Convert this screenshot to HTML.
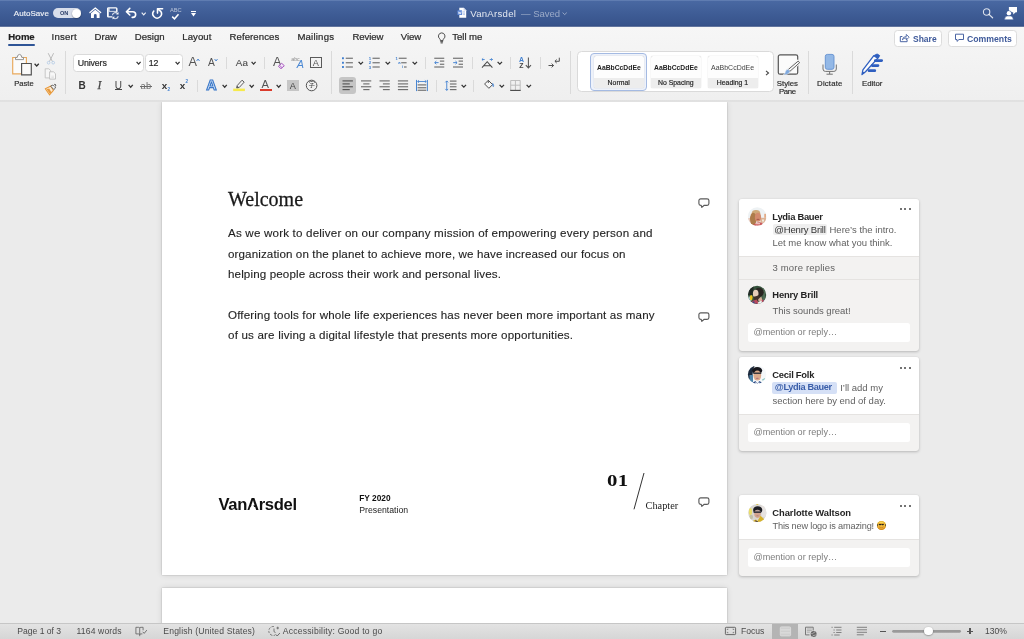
<!DOCTYPE html>
<html lang="en">
<head>
<meta charset="utf-8">
<title>VanArsdel</title>
<style>
*{box-sizing:border-box;margin:0;padding:0}
html,body{width:1024px;height:639px;overflow:hidden}
body{position:relative;background:#ebebeb;font-family:"Liberation Sans",sans-serif;color:#222;-webkit-font-smoothing:antialiased}
#root{position:absolute;left:0;top:0;width:1024px;height:639px;overflow:hidden;will-change:transform}
.abs{position:absolute}
.t{position:absolute;white-space:nowrap;line-height:1}
svg{position:absolute;overflow:visible}
/* title bar */
#titlebar{position:absolute;left:0;top:0;width:1024px;height:27px;background:linear-gradient(#5f7cb1 0,#5f7cb1 1px,#4968a2 1px,#3f5d96 13px,#37538b 25px,#334d84 26px,#62759e 26px,#62759e 27px)}
#titlebar .t{color:#fff}
/* ribbon */
#ribbon{position:absolute;left:0;top:27px;width:1024px;height:74.600px;background:linear-gradient(#f6f6f6,#f3f3f3 40%,#efefef 72.700px,#e4e4e4 73.200px,#dbdbdb 74px,#e2e2e2 74.600px)}
.tab{position:absolute;top:32px;font-size:9.6px;line-height:1;color:#2b2b2b;white-space:nowrap;letter-spacing:.1px;-webkit-text-stroke:.22px #2b2b2b}
.vsep{position:absolute;width:1px;background:#dcdcdc}
.lbl{position:absolute;font-size:8px;line-height:9px;color:#2b2b2b;text-align:center;white-space:nowrap;-webkit-text-stroke:.18px #2b2b2b}
.caret{position:absolute;width:5px;height:3px}
/* page */
.page{position:absolute;background:#fff;box-shadow:0 0 6px rgba(0,0,0,.12),0 0 1.500px rgba(0,0,0,.26)}
.body{position:absolute;left:228px;font-size:11.6px;line-height:12px;color:#1f1f1f;white-space:nowrap;-webkit-text-stroke:.12px #1f1f1f}
/* comments */
.card{position:absolute;left:739px;width:180px;background:#f3f2f1;border-radius:3px;box-shadow:0 1px 3px rgba(0,0,0,.22),0 0 1px rgba(0,0,0,.15);overflow:hidden}
.card .top{position:absolute;left:0;top:0;width:100%;background:#fff}
.cname{position:absolute;left:33.3px;font-size:9.4px;font-weight:bold;color:#242424;white-space:nowrap;line-height:1}
.ctext{position:absolute;left:33.5px;font-size:9.5px;color:#616161;white-space:nowrap;line-height:1}
.reply{position:absolute;left:9px;width:161.800px;height:18.600px;background:#fff;border-radius:2.500px;font-size:9.1px;color:#7d7d7d;line-height:18.6px;padding-left:5.500px;white-space:nowrap}
.dots{position:absolute;left:160.5px;width:11px;height:3px}
.dots i{position:absolute;top:0;width:2px;height:2px;border-radius:1px;background:#444}
.av{position:absolute;left:9px;width:18px;height:18px;border-radius:9px;overflow:hidden}
/* status bar */
#status{position:absolute;left:0;top:623px;width:1024px;height:16px;background:linear-gradient(#c6c6c6 0,#c6c6c6 .8px,#e3e3e3 .8px,#d6d6d6)}
#status .t{font-size:8.6px;color:#4a4a4a;top:3.700px}
</style>
</head>
<body>
<div id="root">

<!-- ================= DOCUMENT AREA ================= -->
<div class="page" style="left:162px;top:102px;width:565px;height:473.300px"></div>
<div class="page" style="left:162px;top:588px;width:565px;height:60px"></div>

<div class="t" style="left:228px;top:188.7px;font-family:'Liberation Serif',serif;font-size:20px;color:#1a1a1a;-webkit-text-stroke:.28px #1a1a1a">Welcome</div>
<div class="body" style="top:227.3px;letter-spacing:.189px">As we work to deliver on our company mission of empowering every person and</div>
<div class="body" style="top:247.7px;letter-spacing:.113px">organization on the planet to achieve more, we have increased our focus on</div>
<div class="body" style="top:268.2px;letter-spacing:.134px">helping people across their work and personal lives.</div>
<div class="body" style="top:308.7px;letter-spacing:.159px">Offering tools for whole life experiences has never been more important as many</div>
<div class="body" style="top:329.1px;letter-spacing:.181px">of us are living a digital lifestyle that presents more opportunities.</div>

<!-- footer of page -->
<div class="t" id="logo" style="left:218.500px;top:496.600px;font-size:16.600px;font-weight:bold;color:#111;letter-spacing:-.32px">Van<span style="position:relative">A<i style="position:absolute;left:.13em;top:.52em;width:.36em;height:.4em;background:#fff;clip-path:polygon(58% 0,100% 100%,0 100%)"></i></span>rsdel</div>
<div class="t" style="left:359.3px;top:494.4px;font-size:8.3px;font-weight:bold;color:#111">FY 2020</div>
<div class="t" style="left:359.3px;top:506.400px;font-size:8.700px;color:#222">Presentation</div>
<div class="t" style="left:606.500px;top:471.900px;font-family:'Liberation Serif',serif;font-size:17.500px;font-weight:bold;color:#111;letter-spacing:.2px;transform:scaleX(1.190);transform-origin:0 50%">01</div>
<svg style="left:630px;top:470px" width="20" height="42"><line x1="14" y1="3" x2="4" y2="39.3" stroke="#333" stroke-width="1"/></svg>
<div class="t" style="left:645.600px;top:501.300px;font-family:'Liberation Serif',serif;font-size:10.300px;color:#222">Chapter</div>

<!-- comment balloons -->
<svg class="bal" style="left:697px;top:196px" width="14" height="13" viewBox="0 0 14 13"><path d="M3.7 2.8h6.4a1.8 1.8 0 0 1 1.8 1.8v2.9a1.8 1.8 0 0 1-1.8 1.8H7.2L4.8 11.4 4.2 9.3H3.7a1.8 1.8 0 0 1-1.8-1.8V4.6a1.8 1.8 0 0 1 1.8-1.8z" fill="#fff" stroke="#5a5a5a" stroke-width="1.15" stroke-linejoin="round"/></svg>
<svg class="bal" style="left:697px;top:310px" width="14" height="13" viewBox="0 0 14 13"><path d="M3.7 2.8h6.4a1.8 1.8 0 0 1 1.8 1.8v2.9a1.8 1.8 0 0 1-1.8 1.8H7.2L4.8 11.4 4.2 9.3H3.7a1.8 1.8 0 0 1-1.8-1.8V4.6a1.8 1.8 0 0 1 1.8-1.8z" fill="#fff" stroke="#5a5a5a" stroke-width="1.15" stroke-linejoin="round"/></svg>
<svg class="bal" style="left:697px;top:494.600px" width="14" height="13" viewBox="0 0 14 13"><path d="M3.7 2.8h6.4a1.8 1.8 0 0 1 1.8 1.8v2.9a1.8 1.8 0 0 1-1.8 1.8H7.2L4.8 11.4 4.2 9.3H3.7a1.8 1.8 0 0 1-1.8-1.8V4.6a1.8 1.8 0 0 1 1.8-1.8z" fill="#fff" stroke="#5a5a5a" stroke-width="1.15" stroke-linejoin="round"/></svg>


<!-- ================= COMMENTS ================= -->
<svg width="0" height="0" style="left:0;top:0"><defs>
<filter id="bl" x="-20%" y="-20%" width="140%" height="140%"><feGaussianBlur stdDeviation="0.55"/></filter>
<filter id="bl2" x="-20%" y="-20%" width="140%" height="140%"><feGaussianBlur stdDeviation="0.35"/></filter>
<clipPath id="c1"><circle cx="13.2" cy="12.6" r="9.3"/></clipPath>
<clipPath id="c2"><circle cx="13.1" cy="12.9" r="9.1"/></clipPath>
<clipPath id="c3"><circle cx="13.1" cy="12.6" r="9.2"/></clipPath>
<clipPath id="c4"><circle cx="13.3" cy="13" r="9.1"/></clipPath>
</defs></svg>

<div class="card" style="top:198.5px;height:152px">
  <div class="top" style="height:57.5px"></div>
  <div class="abs" style="left:0;top:57.5px;width:180px;height:1px;background:#e5e3e1"></div>
  <div class="abs" style="left:0;top:80px;width:180px;height:1px;background:#e5e3e1"></div>
  <svg style="left:5px;top:5.5px" width="26" height="26" viewBox="0 0 26 26"><g clip-path="url(#c1)"><rect width="26" height="26" fill="#eef2f4"/><g filter="url(#bl)"><rect x="3" y="14" width="5" height="5" fill="#e6c9bb"/><rect x="16.500" y="13.800" width="6.500" height="5" fill="#dcb294"/><rect x="20.300" y="9.800" width="1.600" height="4" fill="#e2a47c"/><ellipse cx="19" cy="16.500" rx="1" ry="1.200" fill="#f1ece0"/><ellipse cx="12" cy="9.300" rx="4.300" ry="3.400" fill="#cfa878"/><ellipse cx="9.300" cy="15" rx="3.300" ry="6.300" fill="#ad7b4b"/><ellipse cx="14" cy="13.200" rx="3.100" ry="4.500" fill="#d38b6e"/><ellipse cx="14" cy="15.300" rx="1.700" ry=".6" fill="#a9584c"/><path d="M9.500 26v-5.500q4.500-3.500 9-1.500v7z" fill="#cc5b5b"/><path d="M11.500 19.300h4.500v.9h-4.500zM12 21.500h5v.8h-5z" fill="#f3dcd8"/></g></g></svg>
  <div class="dots" style="top:9.9px"><i style="left:0"></i><i style="left:4.5px"></i><i style="left:9px"></i></div>
  <div class="cname" style="top:13px;letter-spacing:-.27px">Lydia Bauer</div>
  <div class="abs" style="left:33.5px;top:25.3px;width:54.5px;height:11px;background:#efefef;border-radius:2px"></div>
  <div class="ctext" style="left:35.3px;top:26.4px;color:#333;letter-spacing:-.17px">@Henry Brill</div>
  <div class="ctext" style="left:90.5px;top:26.4px">Here’s the intro.</div>
  <div class="ctext" style="top:39.5px">Let me know what you think.</div>
  <div class="ctext" style="top:64.5px;letter-spacing:.17px">3 more replies</div>
  <svg style="left:5px;top:83.500px" width="26" height="26" viewBox="0 0 26 26"><g clip-path="url(#c2)"><rect width="26" height="26" fill="#35523c"/><g filter="url(#bl)"><rect x="3" y="3" width="6.500" height="10" fill="#222b25"/><rect x="18.500" y="6" width="2.500" height="13" fill="#4f6c55"/><ellipse cx="5.500" cy="17.500" rx="2" ry="3" fill="#a9cfd8"/><ellipse cx="7.200" cy="15.600" rx="1.400" ry="2.700" fill="#ecc41f"/><ellipse cx="15" cy="10.300" rx="4.700" ry="4.600" fill="#2b2723"/><ellipse cx="11.700" cy="11.800" rx="2.800" ry="4" fill="#e6cdb9"/><path d="M9.300 14.200q2.500 1 5.700-1.500l1.200 4.300q-3 3.500-5.800 1.300z" fill="#40322b"/><path d="M14.200 17.200l3.200-2.700 1.200 5h-4z" fill="#d8b19a"/><path d="M6.500 26l1.500-7 4.500-1.500 2.500 3.500 3.500-3.500 3.500 1.500 1.500 7z" fill="#b8485b"/><path d="M8.500 19.500h2v4h-2zM19.500 18.500h2v4h-2zM11.500 21.500h1.500v3h-1.500z" fill="#39498c"/><path d="M13.800 20.500l3.700-2 1.500 5h-5z" fill="#eef2f5"/></g></g></svg>
  <div class="cname" style="top:91.8px;letter-spacing:-.15px">Henry Brill</div>
  <div class="ctext" style="top:107px">This sounds great!</div>
  <div class="reply" style="top:124.5px">@mention or reply…</div>
</div>

<div class="card" style="top:357px;height:94px">
  <div class="top" style="height:57px"></div>
  <div class="abs" style="left:0;top:57px;width:180px;height:1px;background:#e5e3e1"></div>
  <svg style="left:5px;top:5px" width="26" height="26" viewBox="0 0 26 26"><g clip-path="url(#c3)"><rect width="26" height="26" fill="#f5f8fa"/><g filter="url(#bl)"><path d="M0 0h12l-3 8-1 12H0z" fill="#1d2b3c"/><path d="M5.500 13h3.500v7H5.500z" fill="#4f86ad"/><ellipse cx="13.200" cy="8.600" rx="5" ry="3.700" fill="#14161b"/><ellipse cx="13.300" cy="13.600" rx="3.900" ry="5" fill="#dcab8d"/><rect x="9.300" y="10.600" width="8" height="1.500" rx=".5" fill="#3a3a40"/><ellipse cx="13.300" cy="16.300" rx="1.500" ry=".6" fill="#b5707a"/><path d="M7.500 26l.5-5 3.500-2 1.800 2.500 2-2.500 3.500 2 .5 5z" fill="#2f4c84"/><path d="M11.500 19.500l1.800 2.500 2-2.500v4h-3.800z" fill="#f2f4f8"/><path d="M18 17.500l3-1.500.5 1.200-3 1.500z" fill="#8fc7c2"/></g></g></svg>
  <div class="dots" style="top:9.5px"><i style="left:0"></i><i style="left:4.5px"></i><i style="left:9px"></i></div>
  <div class="cname" style="top:12.6px;letter-spacing:-.24px">Cecil Folk</div>
  <div class="abs" style="left:33px;top:25px;width:64.6px;height:12px;background:#d5e0f6;border-radius:2px"></div>
  <div class="ctext" style="left:35.8px;top:26.3px;color:#3a5ea9;font-weight:bold;font-size:9.2px;letter-spacing:-.35px">@Lydia Bauer</div>
  <div class="ctext" style="left:101.2px;top:26.3px">I’ll add my</div>
  <div class="ctext" style="top:39px">section here by end of day.</div>
  <div class="reply" style="top:66.4px">@mention or reply…</div>
</div>

<div class="card" style="top:495.2px;height:80.8px">
  <div class="top" style="height:43.8px"></div>
  <div class="abs" style="left:0;top:43.8px;width:180px;height:1px;background:#e5e3e1"></div>
  <svg style="left:5px;top:4.800px" width="26" height="26" viewBox="0 0 26 26"><g clip-path="url(#c4)"><rect width="26" height="26" fill="#d9d6d2"/><g filter="url(#bl)"><rect x="17.500" y="4" width="6" height="13" fill="#e6e2e0"/><ellipse cx="6.400" cy="11.500" rx="1.700" ry="3.500" fill="#e8dc6a"/><ellipse cx="7.200" cy="17" rx="1.800" ry="2.300" fill="#c2c0a6"/><ellipse cx="13.300" cy="4.300" rx="1.200" ry=".6" fill="#d9c24a"/><ellipse cx="13.700" cy="10" rx="4.600" ry="3.800" fill="#1f1e24"/><ellipse cx="13.500" cy="13.800" rx="3.300" ry="4.100" fill="#d3a590"/><rect x="9.600" y="11.300" width="7.400" height="1.700" rx=".6" fill="#3a3840"/><path d="M10.800 11.300l2.700-1.200 3.200 1.200z" fill="#9d9ea6" opacity=".8"/><ellipse cx="13.500" cy="15.800" rx="1.300" ry=".5" fill="#b97f74"/><path d="M8.500 26l1-5.500 2.500-1 1.500 1.500 3-5.200 4 3.700 1.500 6.500z" fill="#d6b22c"/><path d="M10.800 20.200l3.200 1-1.700 2.600z" fill="#51403a"/></g></g></svg>
  <div class="dots" style="top:9.8px"><i style="left:0"></i><i style="left:4.5px"></i><i style="left:9px"></i></div>
  <div class="cname" style="top:12.7px;letter-spacing:-.07px">Charlotte Waltson</div>
  <div class="ctext" style="top:26.6px;font-size:9.2px;letter-spacing:-.17px">This new logo is amazing!</div>
  <div class="abs" style="left:137.800px;top:26px;width:8.800px;height:8.800px;border-radius:4.400px;background:linear-gradient(#fde566,#f6c03c 45%,#eda32e)"></div>
  <div class="t" style="left:137px;top:25.600px;font-family:'DejaVu Sans',sans-serif;font-size:10px;color:transparent;background:linear-gradient(#e0aa30 0,#e0aa30 27%,#25211f 31%,#25211f 50%,#c98a22 56%,#c27c18 100%);-webkit-background-clip:text;background-clip:text">😎</div>
  <div class="reply" style="top:53.3px">@mention or reply…</div>
</div>

<!-- ================= TITLE BAR ================= -->
<div id="titlebar">
  <div class="t" style="left:13.8px;top:9.900px;font-size:8px;color:rgba(255,255,255,.9);letter-spacing:.05px;-webkit-text-stroke:.15px rgba(255,255,255,.9)">AutoSave</div>
  <div class="abs" style="left:53.2px;top:8.300px;width:28.300px;height:9.800px;border-radius:5px;background:#d8deeb"></div>
  <div class="t" style="left:60px;top:11.2px;font-size:5.6px;font-weight:bold;color:#2a3d68">ON</div>
  <div class="abs" style="left:72.3px;top:8.5px;width:9.2px;height:9.2px;border-radius:5px;background:#fff;box-shadow:0 .5px 1.5px rgba(0,0,0,.45)"></div>
  <!-- home -->
  <svg style="left:89px;top:7px" width="13" height="12" viewBox="0 0 13 12"><path d="M.9 5.500L6.300 1l5.400 4.500" fill="none" stroke="#fff" stroke-width="1.250" stroke-linecap="round" stroke-linejoin="round"/><path d="M2 6.200L6.300 2.700l4.300 3.500v4.900H7.700V8.400a1.400 1.400 0 0 0-2.800 0v2.700H2z" fill="#fff"/></svg>
  <!-- save w/ sync -->
  <svg style="left:106px;top:7px" width="14" height="13" viewBox="0 0 14 13"><path d="M6.300 9.900H2.600a.9.900 0 0 1-.9-.9V1.700a.9.900 0 0 1 .9-.9h7.400a.9.900 0 0 1 .9.900v3.500" fill="none" stroke="#fff" stroke-width="1.300"/><path d="M1.800 1.500v8" stroke="#fff" stroke-width="1.600"/><path d="M3.200 1.100v3.300h7.300V1.100" fill="none" stroke="rgba(255,255,255,.85)" stroke-width=".9"/><path d="M6.400 8.300a3 3 0 0 1 5.300-1.500M12.200 9.100a3 3 0 0 1-5.300 1.500" fill="none" stroke="rgba(255,255,255,.8)" stroke-width="1.100"/><path d="M12.600 5v2.600H10zM6.500 12.400V9.800h2.600z" fill="rgba(255,255,255,.85)"/></svg>
  <!-- undo -->
  <svg style="left:125px;top:7px" width="14" height="12" viewBox="0 0 14 12"><path d="M4.800 1.400L1.400 4.700l3.400 3.300M1.700 4.700h6.100a2.850 2.850 0 0 1 0 5.700h-.6" fill="none" stroke="#fff" stroke-width="1.600" stroke-linecap="round" stroke-linejoin="round"/></svg>
  <svg style="left:140.800px;top:11.600px" width="6" height="4" viewBox="0 0 6 4"><path d="M.7.700l2 2.100 2-2.100" fill="none" stroke="rgba(255,255,255,.9)" stroke-width="1.200"/></svg>
  <!-- redo -->
  <svg style="left:151px;top:7px" width="13" height="13" viewBox="0 0 13 13"><path d="M2.800 4A4.300 4.300 0 1 0 9.700 4.300L6.700 1.900" fill="none" stroke="#fff" stroke-width="1.550" stroke-linecap="round"/><path d="M11.600 1.800H6.500v4.300" fill="none" stroke="#fff" stroke-width="1.550" stroke-linecap="round" stroke-linejoin="round"/></svg>
  <!-- abc check -->
  <div class="t" style="left:169.900px;top:7.600px;font-size:5.700px;color:rgba(255,255,255,.62)">ABC</div>
  <svg style="left:171px;top:12.500px" width="10" height="7" viewBox="0 0 10 7"><path d="M1.200 3.600l2.300 2.200L7.500 1.200" fill="none" stroke="#fff" stroke-width="1.500"/></svg>
  <!-- customize -->
  <svg style="left:190px;top:10px" width="7" height="8" viewBox="0 0 7 8"><path d="M1 1.500h5" stroke="#fff" stroke-width="1.100"/><path d="M1 3h5L3.500 6.500z" fill="#fff"/></svg>
  <!-- doc icon -->
  <svg style="left:457px;top:7px" width="10" height="12" viewBox="0 0 10 12"><path d="M2.300.8h4.500L9.200 3.200v7.600H2.300z" fill="#fff"/><path d="M6.600.8v2.600h2.600z" fill="#c8d3ea"/><rect x=".4" y="3.300" width="4.800" height="4.800" rx=".7" fill="#5b86d6"/><path d="M1.300 4.500l.8 2.600.7-2.200.7 2.200.8-2.600" fill="none" stroke="#fff" stroke-width=".6"/><path d="M6 4.800h2M6 6.200h2M6 7.600h2" stroke="#8aa6dc" stroke-width=".6"/></svg>
  <div class="t" style="left:470.200px;top:8.900px;font-size:9.600px;color:rgba(255,255,255,.86);letter-spacing:.27px">VanArsdel</div>
  <div class="t" style="left:521px;top:8.900px;font-size:9.500px;color:rgba(255,255,255,.47)">— Saved</div>
  <svg style="left:562px;top:11.800px" width="6" height="4" viewBox="0 0 6 4"><path d="M.6.600l2.100 2 2.100-2" fill="none" stroke="rgba(255,255,255,.5)" stroke-width=".9"/></svg>
  <!-- search -->
  <svg style="left:981px;top:6px" width="14" height="14" viewBox="0 0 14 14"><circle cx="5.600" cy="6" r="3.200" fill="none" stroke="rgba(255,255,255,.82)" stroke-width="1.100"/><path d="M8 8.400l3.600 3.400" stroke="rgba(255,255,255,.82)" stroke-width="1.200" stroke-linecap="round"/></svg>
  <!-- person + bubble -->
  <svg style="left:1003px;top:6px" width="16" height="15" viewBox="0 0 16 15"><path d="M5.900.9h8.100v5.400h-1.300l-2.500 2.100V6.300H5.900z" fill="#fff"/><circle cx="5.900" cy="7.300" r="2.900" fill="#3d5b99"/><circle cx="5.900" cy="7.300" r="2.200" fill="#fff"/><path d="M1.500 13.700q.3-3.600 2.700-3.700h3.400q2.400.1 2.700 3.700z" fill="#fff" stroke="#3d5b99" stroke-width=".5"/></svg>
</div>

<!-- ================= RIBBON ================= -->
<div id="ribbon"></div>
<!-- tabs -->
<div class="tab" style="left:8.2px;font-weight:bold;letter-spacing:-.05px;color:#1f1f1f">Home</div>
<div class="abs" style="left:8px;top:43.9px;width:27px;height:2.6px;border-radius:1.3px;background:#2f5597"></div>
<div class="tab" style="left:51.6px;letter-spacing:.2px">Insert</div>
<div class="tab" style="left:94.6px;letter-spacing:0">Draw</div>
<div class="tab" style="left:134.8px;letter-spacing:0">Design</div>
<div class="tab" style="left:182.3px;letter-spacing:.05px">Layout</div>
<div class="tab" style="left:229.5px;letter-spacing:.08px">References</div>
<div class="tab" style="left:297.4px;letter-spacing:.2px">Mailings</div>
<div class="tab" style="left:352.4px;letter-spacing:-.1px">Review</div>
<div class="tab" style="left:400.8px;letter-spacing:-.1px">View</div>
<svg style="left:436px;top:30.5px" width="12" height="13" viewBox="0 0 12 13"><path d="M5.700 1.900a3.300 3.300 0 0 1 2 5.900q-.7.700-.7 1.800H4.400q0-1.100-.7-1.800a3.300 3.300 0 0 1 2-5.900z" fill="none" stroke="#444" stroke-width=".95"/><path d="M4.300 10.700h2.800M4.600 11.900h2.200" stroke="#444" stroke-width="1"/></svg>
<div class="tab" style="left:452.3px;letter-spacing:-.05px">Tell me</div>
<!-- share / comments -->
<div class="abs" style="left:894.200px;top:29.700px;width:47.500px;height:17px;background:#fff;border:1px solid #dcdcdc;border-radius:3.500px"></div>
<svg style="left:899.100px;top:32.900px" width="11" height="10" viewBox="0 0 11 10"><path d="M3.400 3.500H1.300v5.200h6.800V6.800" fill="none" stroke="#4a64a3" stroke-width="1"/><path d="M3.300 6.900q.4-3.400 4-3.400V1.400l2.800 2.800-2.800 2.800V4.900q-2.600 0-4 2z" fill="none" stroke="#4a64a3" stroke-width=".9" stroke-linejoin="round"/></svg>
<div class="t" style="left:913px;top:33.800px;font-size:9.600px;font-weight:bold;color:#3f5a9a;transform:scaleX(.885);transform-origin:0 50%">Share</div>
<div class="abs" style="left:948.400px;top:29.700px;width:68.600px;height:17px;background:#fff;border:1px solid #dcdcdc;border-radius:3.500px"></div>
<svg style="left:953.900px;top:33.400px" width="11" height="10" viewBox="0 0 11 10"><path d="M1.500 1.200h8v5.300H5L3 8.400V6.500H1.500z" fill="none" stroke="#4a64a3" stroke-width="1" stroke-linejoin="round"/></svg>
<div class="t" style="left:967.300px;top:33.800px;font-size:9.600px;font-weight:bold;color:#3f5a9a;transform:scaleX(.905);transform-origin:0 50%">Comments</div>
<!-- ribbon groups: clipboard + font -->
<div class="vsep" style="left:65.2px;top:51.0px;height:43.3px;background:#dadada"></div>
<div class="vsep" style="left:331.4px;top:51.0px;height:43.3px;background:#dadada"></div>
<div class="vsep" style="left:570.0px;top:51.0px;height:43.3px;background:#dadada"></div>
<div class="vsep" style="left:808.2px;top:51.0px;height:43.3px;background:#dadada"></div>
<div class="vsep" style="left:852.3px;top:51.0px;height:43.3px;background:#dadada"></div>
<div class="vsep" style="left:226.4px;top:56.8px;height:11.8px;background:#dadada"></div>
<div class="vsep" style="left:264.2px;top:56.8px;height:11.8px;background:#dadada"></div>
<div class="vsep" style="left:424.7px;top:56.8px;height:11.8px;background:#dadada"></div>
<div class="vsep" style="left:472.2px;top:56.8px;height:11.8px;background:#dadada"></div>
<div class="vsep" style="left:510.3px;top:56.8px;height:11.8px;background:#dadada"></div>
<div class="vsep" style="left:539.5px;top:56.8px;height:11.8px;background:#dadada"></div>
<div class="vsep" style="left:197.3px;top:80.0px;height:11.8px;background:#dadada"></div>
<div class="vsep" style="left:436.3px;top:80.0px;height:11.8px;background:#dadada"></div>
<div class="vsep" style="left:473.1px;top:80.0px;height:11.8px;background:#dadada"></div>
<!-- paste -->
<svg style="left:10px;top:52px" width="24" height="26" viewBox="0 0 24 26"><path d="M2.700 5.500h13.700v16.300H2.700z" fill="#fbfbfb" stroke="#e9a95c" stroke-width="1.150"/><path d="M5.500 7.600V5.400h1.700q.3-3 2.300-3t2.300 3h1.700v2.200z" fill="#fafafa" stroke="#8a8a8a" stroke-width=".9" stroke-linejoin="round"/><path d="M11.600 11.500h9.700v11.400h-9.700z" fill="#fafafa" stroke="#505050" stroke-width="1.150"/></svg>
<svg style="left:34.3px;top:62.8px" width="5.4" height="3.8" viewBox="0 0 5.4 3.8"><path d="M.6 .8l2.10 2.20 2.10-2.20" fill="none" stroke="#333" stroke-width="1.25"/></svg>
<div class="lbl" style="left:4px;top:79.300px;width:40px;font-size:7.600px">Paste</div>
<!-- cut (disabled) -->
<svg style="left:45px;top:52px" width="12" height="14" viewBox="0 0 12 14"><path d="M3.200 1.200l4.300 8.500M8.600 1.200L4.300 9.700" stroke="#b4b4b4" stroke-width=".9" fill="none"/><circle cx="3.600" cy="10.700" r="1.350" fill="none" stroke="#b7cde6" stroke-width=".9"/><circle cx="8.200" cy="10.700" r="1.350" fill="none" stroke="#b7cde6" stroke-width=".9"/></svg>
<!-- copy (disabled) -->
<svg style="left:44px;top:67px" width="14" height="14" viewBox="0 0 14 14"><path d="M1.200 1.800h3.600l1.800 1.600v7.500H1.200z" fill="#f6f6f6" stroke="#c2c2c2" stroke-width=".9"/><path d="M5.600 4.800h3.900l2 1.900v5.400H5.600z" fill="#f8f8f8" stroke="#bdbdbd" stroke-width=".9"/><path d="M7.300 9.200h2.600M7.300 10.500h2.600" stroke="#d4d4d4" stroke-width=".6"/></svg>
<!-- format painter -->
<svg style="left:44px;top:83px" width="14" height="13" viewBox="0 0 14 13"><path d="M1.300 5.700l5.600-2.600 2.500 4.200-3.900 4.500z" fill="#fbe9d2" stroke="#e8993a" stroke-width="1.100" stroke-linejoin="round"/><path d="M2.600 6.300L6 11.100l1.500-1.700-2.300-3.800z" fill="#e8993a"/><path d="M6.700 3.200l1.500-1 1.300.5 1.300-1.500 1.200.8-1 1.700.5 1.300-1.700 1.500z" fill="#f4f4f4" stroke="#555" stroke-width=".9" stroke-linejoin="round"/></svg>
<div class="abs" style="left:73.400px;top:54.100px;width:70.300px;height:17.600px;background:#fff;border:1px solid #dadada;border-radius:3.500px"></div>
<div class="t" style="left:77.700px;top:58.700px;font-size:8.800px;color:#2a2a2a;letter-spacing:-.12px;-webkit-text-stroke:.2px #2a2a2a">Univers</div>
<svg style="left:135.6px;top:61.2px" width="5.2" height="3.9" viewBox="0 0 5.2 3.9"><path d="M.6 .8l2.00 2.30 2.00-2.30" fill="none" stroke="#333" stroke-width="1.25"/></svg>
<div class="abs" style="left:144.900px;top:54.100px;width:38.500px;height:17.600px;background:#fff;border:1px solid #dadada;border-radius:3.500px"></div>
<div class="t" style="left:148.800px;top:58.700px;font-size:8.800px;color:#2a2a2a;letter-spacing:-.3px;-webkit-text-stroke:.2px #2a2a2a">12</div>
<svg style="left:175.3px;top:61.2px" width="5.2" height="3.9" viewBox="0 0 5.2 3.9"><path d="M.6 .8l2.00 2.30 2.00-2.30" fill="none" stroke="#333" stroke-width="1.25"/></svg>
<div class="t" style="left:188.400px;top:55.700px;font-size:12.700px;color:#555">A</div>
<svg style="left:196px;top:57.500px" width="4.500" height="4" viewBox="0 0 4.500 4"><path d="M.6 3l1.450-2 1.450 2" fill="none" stroke="#4a86d0" stroke-width=".95"/></svg>
<div class="t" style="left:207.900px;top:57.900px;font-size:10.200px;color:#505050">A</div>
<svg style="left:213.500px;top:57.500px" width="4.500" height="4" viewBox="0 0 4.500 4"><path d="M.6 1l1.450 2 1.450-2" fill="none" stroke="#4a86d0" stroke-width=".95"/></svg>
<div class="t" style="left:235.800px;top:58.200px;font-size:9.800px;color:#4d4d4d;letter-spacing:.1px;-webkit-text-stroke:.12px #4d4d4d">Aa</div>
<svg style="left:251.3px;top:61.2px" width="5.2" height="3.9" viewBox="0 0 5.2 3.9"><path d="M.6 .8l2.00 2.30 2.00-2.30" fill="none" stroke="#333" stroke-width="1.25"/></svg>
<div class="t" style="left:272.900px;top:55.700px;font-size:12.700px;color:#555">A</div>
<svg style="left:277px;top:61.500px" width="9" height="8" viewBox="0 0 9 8"><path d="M1.400 4.300l3.300-3 2.600 2.400-3.300 3z" fill="#f3e6f7" stroke="#a24fbc" stroke-width=".95" stroke-linejoin="round"/><path d="M2.500 3.300l2.600 2.400" stroke="#a24fbc" stroke-width=".8"/></svg>
<div class="t" style="left:291.200px;top:56.800px;font-size:5.300px;color:#888">abc</div>
<div class="t" style="left:296.800px;top:58.900px;font-size:10.800px;font-style:italic;color:#4a88d4">A</div>
<div class="abs" style="left:310px;top:57.400px;width:11.700px;height:10.900px;border:1px solid #5a5a5a"></div>
<div class="t" style="left:312.700px;top:58.500px;font-size:9.200px;color:#555">A</div>
<div class="t" style="left:78.600px;top:80.500px;font-size:10px;font-weight:bold;color:#333">B</div>
<div class="t" style="left:97.400px;top:80.300px;font-family:'Liberation Serif',serif;font-size:11.600px;font-style:italic;color:#444;-webkit-text-stroke:.25px #444">I</div>
<div class="t" style="left:114.700px;top:80.800px;font-size:10px;color:#444">U</div>
<div class="abs" style="left:115.200px;top:89.400px;width:6.400px;height:.9px;background:#444"></div>
<svg style="left:128.4px;top:83.7px" width="5.4" height="4.0" viewBox="0 0 5.4 4.0"><path d="M.6 .8l2.10 2.40 2.10-2.40" fill="none" stroke="#333" stroke-width="1.25"/></svg>
<div class="t" style="left:140.600px;top:81.600px;font-size:9.300px;color:#6a6a6a;letter-spacing:.2px">ab</div>
<div class="abs" style="left:140.200px;top:85.700px;width:11.400px;height:.9px;background:#6a6a6a"></div>
<div class="t" style="left:161.800px;top:80.600px;font-size:9.800px;color:#333;font-weight:bold">x</div>
<div class="t" style="left:167.600px;top:87.600px;font-size:4.600px;color:#3f7fd0;font-weight:bold">2</div>
<div class="t" style="left:179.800px;top:80.600px;font-size:9.800px;color:#333;font-weight:bold">x</div>
<div class="t" style="left:185.500px;top:79.600px;font-size:4.600px;color:#3f7fd0;font-weight:bold">2</div>
<div class="t" style="left:206.300px;top:78.300px;font-size:14.400px;font-weight:bold;color:#dfeaf8;-webkit-text-stroke:1.100px #3a78c9">A</div>
<svg style="left:221.9px;top:83.7px" width="5.4" height="4.0" viewBox="0 0 5.4 4.0"><path d="M.6 .8l2.10 2.40 2.10-2.40" fill="none" stroke="#333" stroke-width="1.25"/></svg>
<svg style="left:233px;top:79px" width="13" height="13" viewBox="0 0 13 13"><path d="M9 1.200l2.200 1.900-5 5.400-2.500.6.400-2.400z" fill="#f4f4f4" stroke="#555" stroke-width=".95" stroke-linejoin="round"/><path d="M4.100 6.700l2.100 1.800-2.500.6z" fill="#555"/><rect x=".2" y="9.600" width="11.700" height="2.500" fill="#f6ea4c"/></svg>
<svg style="left:248.9px;top:83.7px" width="5.4" height="4.0" viewBox="0 0 5.4 4.0"><path d="M.6 .8l2.10 2.40 2.10-2.40" fill="none" stroke="#333" stroke-width="1.25"/></svg>
<div class="t" style="left:261.500px;top:78.700px;font-size:11.200px;color:#555">A</div>
<div class="abs" style="left:260px;top:88.600px;width:12px;height:2.500px;background:#da3b2c"></div>
<svg style="left:275.8px;top:83.7px" width="5.4" height="4.0" viewBox="0 0 5.4 4.0"><path d="M.6 .8l2.10 2.40 2.10-2.40" fill="none" stroke="#333" stroke-width="1.25"/></svg>
<div class="abs" style="left:287.200px;top:80.200px;width:11.600px;height:10.900px;background:#c6c6c6"></div>
<div class="t" style="left:289.800px;top:81.500px;font-size:9.200px;color:#444">A</div>
<svg style="left:305px;top:79px" width="14" height="14" viewBox="0 0 14 14"><circle cx="6.600" cy="6.500" r="5.300" fill="none" stroke="#4a4a4a" stroke-width=".95"/></svg>
<div class="t" style="left:308.400px;top:82.200px;font-family:'Liberation Sans','Noto Sans CJK SC',sans-serif;font-size:6.600px;color:#444">字</div>
<!-- ribbon groups: paragraph -->
<svg style="left:340px;top:55px" width="14" height="15" viewBox="0 0 14 15"><rect x="2" y="2.30" width="1.9" height="1.9" fill="#3f7fd0"/><rect x="2" y="6.80" width="1.9" height="1.9" fill="#3f7fd0"/><rect x="2" y="11.05" width="1.9" height="1.9" fill="#3f7fd0"/><path d="M5.75 3.25H12.90" stroke="#6e6e6e" stroke-width="1.15"/><path d="M5.75 7.75H12.90" stroke="#6e6e6e" stroke-width="1.15"/><path d="M5.75 12.00H12.90" stroke="#6e6e6e" stroke-width="1.15"/></svg>
<svg style="left:357.7px;top:61.2px" width="5.6" height="4.0" viewBox="0 0 5.6 4.0"><path d="M.6 .8l2.20 2.40 2.20-2.40" fill="none" stroke="#333" stroke-width="1.25"/></svg>
<svg style="left:367px;top:55px" width="14" height="15" viewBox="0 0 14 15"><text x="1.7" y="4.75" font-family="Liberation Sans, sans-serif" font-size="4.3" font-weight="bold" fill="#3f7fd0">1</text><text x="1.7" y="9.25" font-family="Liberation Sans, sans-serif" font-size="4.3" font-weight="bold" fill="#3f7fd0">2</text><text x="1.7" y="13.50" font-family="Liberation Sans, sans-serif" font-size="4.3" font-weight="bold" fill="#3f7fd0">3</text><path d="M5.50 3.25H12.75" stroke="#6e6e6e" stroke-width="1.15"/><path d="M5.50 7.75H12.75" stroke="#6e6e6e" stroke-width="1.15"/><path d="M5.50 12.00H12.75" stroke="#6e6e6e" stroke-width="1.15"/></svg>
<svg style="left:384.6px;top:61.2px" width="5.6" height="4.0" viewBox="0 0 5.6 4.0"><path d="M.6 .8l2.20 2.40 2.20-2.40" fill="none" stroke="#333" stroke-width="1.25"/></svg>
<svg style="left:394px;top:55px" width="14" height="15" viewBox="0 0 14 15"><text x="1.6" y="4.65" font-family="Liberation Sans, sans-serif" font-size="4.2" font-weight="bold" fill="#3f7fd0">1</text><text x="4.3" y="9.05" font-family="Liberation Sans, sans-serif" font-size="4.2" font-weight="bold" fill="#3f7fd0">a</text><text x="7.7" y="13.40" font-family="Liberation Sans, sans-serif" font-size="4.2" font-weight="bold" fill="#3f7fd0">i</text><path d="M4.75 3.25H12.60" stroke="#6e6e6e" stroke-width="1.15"/><path d="M7.20 7.75H12.60" stroke="#6e6e6e" stroke-width="1.15"/><path d="M10.00 12.00H12.60" stroke="#6e6e6e" stroke-width="1.15"/></svg>
<svg style="left:411.7px;top:61.2px" width="5.6" height="4.0" viewBox="0 0 5.6 4.0"><path d="M.6 .8l2.20 2.40 2.20-2.40" fill="none" stroke="#333" stroke-width="1.25"/></svg>
<svg style="left:433px;top:55px" width="13" height="15" viewBox="0 0 13 15"><path d="M1.25 3.25H11.25" stroke="#6e6e6e" stroke-width="1.15"/><path d="M6.90 6.10H11.25" stroke="#6e6e6e" stroke-width="1.15"/><path d="M6.90 9.25H11.25" stroke="#6e6e6e" stroke-width="1.15"/><path d="M1.25 12.00H11.25" stroke="#6e6e6e" stroke-width="1.15"/><path d="M5.600 7.650H1.800M3.300 6.100L1.700 7.650l1.600 1.550" fill="none" stroke="#3f7fd0" stroke-width=".95"/></svg>
<svg style="left:452px;top:55px" width="13" height="15" viewBox="0 0 13 15"><path d="M1.00 3.25H11.00" stroke="#6e6e6e" stroke-width="1.15"/><path d="M6.60 6.10H11.00" stroke="#6e6e6e" stroke-width="1.15"/><path d="M6.60 9.25H11.00" stroke="#6e6e6e" stroke-width="1.15"/><path d="M1.00 12.00H11.00" stroke="#6e6e6e" stroke-width="1.15"/><path d="M1.200 7.650H5M3.500 6.100l1.600 1.550-1.600 1.550" fill="none" stroke="#3f7fd0" stroke-width=".95"/></svg>
<svg style="left:480px;top:56px" width="15" height="13" viewBox="0 0 15 13"><path d="M2 11.600L7.200 5.700l5.200 5.900M3.700 9.700h7" fill="none" stroke="#4a4a4a" stroke-width="1.050"/><path d="M4.700 3.500H2M3.200 2.300L1.900 3.500l1.300 1.200M9.700 3.500h2.700M11.200 2.300l1.300 1.200-1.300 1.200" fill="none" stroke="#3f7fd0" stroke-width=".85"/></svg>
<svg style="left:497.2px;top:61.2px" width="5.6" height="4.0" viewBox="0 0 5.6 4.0"><path d="M.6 .8l2.20 2.40 2.20-2.40" fill="none" stroke="#333" stroke-width="1.25"/></svg>
<svg style="left:518px;top:56px" width="14" height="14" viewBox="0 0 14 14"><text x="1" y="5.900" font-family="Liberation Sans, sans-serif" font-size="6.900" font-weight="bold" fill="#3f7fd0">A</text><text x="1.300" y="12.300" font-family="Liberation Sans, sans-serif" font-size="6.900" font-weight="bold" fill="#444">Z</text><path d="M10.400 1.400v10.300M7.800 9.200l2.600 2.700 2.600-2.700" fill="none" stroke="#555" stroke-width="1.050"/></svg>
<svg style="left:547px;top:56px" width="14" height="13" viewBox="0 0 14 13"><path d="M1.500 9.500h5M4.600 7.600l2 1.900-2 1.900" fill="none" stroke="#4a4a4a" stroke-width=".95"/><path d="M12.300 1.700v3.600H8M9.700 3.600L7.900 5.300l1.800 1.700" fill="none" stroke="#4a4a4a" stroke-width=".95"/></svg>
<div class="abs" style="left:339.100px;top:77px;width:17px;height:17px;border-radius:3px;background:#c5c5c5"></div>
<svg style="left:341px;top:78px" width="13" height="14" viewBox="0 0 13 14"><path d="M1.50 2.90H11.90" stroke="#555" stroke-width="1.15"/><path d="M1.50 5.90H8.75" stroke="#555" stroke-width="1.15"/><path d="M1.50 8.75H11.90" stroke="#555" stroke-width="1.15"/><path d="M1.50 11.60H8.75" stroke="#555" stroke-width="1.15"/></svg>
<svg style="left:360px;top:78px" width="13" height="14" viewBox="0 0 13 14"><path d="M1.00 2.90H11.25" stroke="#6e6e6e" stroke-width="1.15"/><path d="M3.25 5.90H9.50" stroke="#6e6e6e" stroke-width="1.15"/><path d="M1.00 8.75H11.25" stroke="#6e6e6e" stroke-width="1.15"/><path d="M3.25 11.60H9.50" stroke="#6e6e6e" stroke-width="1.15"/></svg>
<svg style="left:378px;top:78px" width="13" height="14" viewBox="0 0 13 14"><path d="M1.50 2.90H11.75" stroke="#6e6e6e" stroke-width="1.15"/><path d="M4.90 5.90H11.75" stroke="#6e6e6e" stroke-width="1.15"/><path d="M1.50 8.75H11.75" stroke="#6e6e6e" stroke-width="1.15"/><path d="M4.90 11.60H11.75" stroke="#6e6e6e" stroke-width="1.15"/></svg>
<svg style="left:397px;top:78px" width="13" height="14" viewBox="0 0 13 14"><path d="M0.90 2.90H11.10" stroke="#6e6e6e" stroke-width="1.15"/><path d="M0.90 5.90H11.10" stroke="#6e6e6e" stroke-width="1.15"/><path d="M0.90 8.75H11.10" stroke="#6e6e6e" stroke-width="1.15"/><path d="M0.90 11.60H11.10" stroke="#6e6e6e" stroke-width="1.15"/></svg>
<svg style="left:415px;top:78px" width="14" height="14" viewBox="0 0 14 14"><path d="M1.500 1.900v11.200M12.400 1.900v11.200" stroke="#3f7fd0" stroke-width=".95"/><path d="M2.600 3.500h8.700M4 2.300L2.700 3.500 4 4.700M9.900 2.300l1.300 1.200-1.300 1.200" fill="none" stroke="#3f7fd0" stroke-width=".85"/><path d="M2.60 6.90H11.30" stroke="#6e6e6e" stroke-width="1.15"/><path d="M2.60 9.75H11.30" stroke="#6e6e6e" stroke-width="1.15"/><path d="M2.60 12.25H11.30" stroke="#6e6e6e" stroke-width="1.15"/></svg>
<svg style="left:444px;top:78px" width="14" height="14" viewBox="0 0 14 14"><path d="M2.750 3v9.300M1.300 4.400l1.450-1.500 1.450 1.500M1.300 10.900l1.450 1.500 1.450-1.500" fill="none" stroke="#3f7fd0" stroke-width=".9"/><path d="M5.90 3.10H12.50" stroke="#6e6e6e" stroke-width="1.15"/><path d="M5.90 6.00H12.50" stroke="#6e6e6e" stroke-width="1.15"/><path d="M5.90 8.75H12.50" stroke="#6e6e6e" stroke-width="1.15"/><path d="M5.90 11.60H12.50" stroke="#6e6e6e" stroke-width="1.15"/></svg>
<svg style="left:461.0px;top:83.7px" width="5.6" height="4.0" viewBox="0 0 5.6 4.0"><path d="M.6 .8l2.20 2.40 2.20-2.40" fill="none" stroke="#333" stroke-width="1.25"/></svg>
<svg style="left:483px;top:78px" width="13" height="14" viewBox="0 0 13 14"><path d="M5.300 2.300l4.300 4.300-3.700 3.700-4.300-4.300z" fill="#f8f8f8" stroke="#4a4a4a" stroke-width=".95" stroke-linejoin="round"/><path d="M5.300 2.300V5" stroke="#4a4a4a" stroke-width=".9"/><path d="M9.700 5.200q1.700 2.300.6 3.700-1.100-1.400-.6-3.700z" fill="#3f7fd0" stroke="#3f7fd0" stroke-width=".5"/></svg>
<svg style="left:498.5px;top:83.7px" width="5.6" height="4.0" viewBox="0 0 5.6 4.0"><path d="M.6 .8l2.20 2.40 2.20-2.40" fill="none" stroke="#333" stroke-width="1.25"/></svg>
<svg style="left:509px;top:79px" width="13" height="13" viewBox="0 0 13 13"><path d="M1.700 1.500h9.500v9.500M1.700 1.500v9.500M6.450 1.500v9.500M1.700 6.200h9.500" fill="none" stroke="#b9b9b9" stroke-width=".9"/><path d="M1.200 11.400h10.500" stroke="#444" stroke-width="1.100"/></svg>
<svg style="left:525.6px;top:83.7px" width="5.6" height="4.0" viewBox="0 0 5.6 4.0"><path d="M.6 .8l2.20 2.40 2.20-2.40" fill="none" stroke="#333" stroke-width="1.25"/></svg>
<!-- ribbon groups: styles, voice, editor -->
<div class="abs" style="left:577px;top:51.300px;width:196.700px;height:41px;background:#fff;border:1px solid #dadada;border-radius:4.500px"></div>
<div class="abs" style="left:590.200px;top:52.800px;width:56.900px;height:38.300px;border:1.800px solid #a4bae2;border-radius:4px;background:#eef2fa"></div>
<div class="abs" style="left:593.7px;top:56.100px;width:50px;height:32.200px;background:#fdfdfd;border-radius:2px;box-shadow:0 0 1px rgba(0,0,0,.3);overflow:hidden"><div class="abs" style="left:0;top:21.900px;width:100%;height:10.300px;background:#ededed"></div></div><div class="t" style="left:596.8px;top:63.500px;font-size:8px;font-weight:bold;color:#222;transform:scaleX(0.847);transform-origin:0 50%">AaBbCcDdEe</div><div class="lbl" style="left:593.7px;top:78.800px;width:50px;font-size:6.900px;line-height:8px;color:#222">Normal</div>
<div class="abs" style="left:650.9px;top:56.100px;width:49.7px;height:32.200px;background:#fdfdfd;border-radius:2px;box-shadow:0 0 1px rgba(0,0,0,.3);overflow:hidden"><div class="abs" style="left:0;top:21.900px;width:100%;height:10.300px;background:#ededed"></div></div><div class="t" style="left:653.7px;top:63.500px;font-size:8px;font-weight:bold;color:#222;transform:scaleX(0.847);transform-origin:0 50%">AaBbCcDdEe</div><div class="lbl" style="left:650.9px;top:78.800px;width:49.7px;font-size:6.900px;line-height:8px;color:#222">No Spacing</div>
<div class="abs" style="left:707.5px;top:56.100px;width:50px;height:32.200px;background:#fdfdfd;border-radius:2px;box-shadow:0 0 1px rgba(0,0,0,.3);overflow:hidden"><div class="abs" style="left:0;top:21.900px;width:100%;height:10.300px;background:#ededed"></div></div><div class="t" style="left:710.5px;top:63.500px;font-size:8px;font-weight:normal;color:#444;transform:scaleX(0.874);transform-origin:0 50%">AaBbCcDdEe</div><div class="lbl" style="left:707.5px;top:78.800px;width:50px;font-size:6.900px;line-height:8px;color:#222">Heading 1</div>
<svg style="left:765px;top:69.5px" width="5" height="6" viewBox="0 0 5 6"><path d="M1 .9l2.500 2.100L1 5.100" fill="none" stroke="#444" stroke-width="1.100"/></svg>
<svg style="left:776px;top:53px" width="25" height="23" viewBox="0 0 25 23"><rect x="2.300" y="1.800" width="19.400" height="19.400" rx="1.800" fill="#fbfbfb" stroke="#555" stroke-width="1.200"/><path d="M11.800 16.700L22 7.800l1.600 1.800-10 9.300z" fill="#fafafa" stroke="#f4f4f4" stroke-width="2.600" stroke-linejoin="round"/><path d="M12.300 16.500L22.200 8.100l1.400 1.600-9.800 8.700z" fill="#fcfcfc" stroke="#5a5a5a" stroke-width=".95" stroke-linejoin="round"/><path d="M12.200 16.300l1.900 2.300q-1.600 3.500-7.100 3.500 2.500-1.500 2.400-3.600.6-2.100 2.800-2.200z" fill="#7fa9de" stroke="#f4f4f4" stroke-width=".5"/></svg>
<div class="lbl" style="left:767.400px;top:79.200px;width:40px;font-size:7.800px">Styles</div>
<div class="lbl" style="left:767.400px;top:87.100px;width:40px;font-size:7.800px;letter-spacing:-.3px">Pane</div>
<svg style="left:820px;top:53px" width="20" height="23" viewBox="0 0 20 23"><rect x="5.300" y="1.400" width="8.700" height="14.900" rx="2" fill="#93b8e6" stroke="#6290d0" stroke-width=".9"/><path d="M3 11.500v4.500q0 2.400 2.400 2.400h8.500q2.400 0 2.400-2.400v-4.500" fill="none" stroke="#707070" stroke-width="1"/><path d="M9.650 18.600v2.400M6.500 21.200h6.300" stroke="#707070" stroke-width="1"/></svg>
<div class="lbl" style="left:809.800px;top:79.200px;width:40px;font-size:7.800px;letter-spacing:.16px">Dictate</div>
<svg style="left:860px;top:52px" width="25" height="25" viewBox="0 0 25 25"><path d="M13.800 3.700l3.300-1.700 2.500 1.500-1.300 2.700" fill="#2f5fc0" stroke="#2f5fc0" stroke-width="1" stroke-linejoin="round"/><path d="M13.800 3.700l4 2.400L5.500 19.700 2 22.500l.9-4.700z" fill="#fdfdfd" stroke="#2f5fc0" stroke-width="1.300" stroke-linejoin="round"/><path d="M2 22.500l.6-3 2.400 1.200z" fill="#2f5fc0"/><path d="M15.300 8.600h6.400M12.200 13.600h5.800M9 18.700h5.800" stroke="#2f5fc0" stroke-width="2.700" stroke-linecap="round"/></svg>
<div class="lbl" style="left:852.200px;top:79.200px;width:40px;font-size:7.800px">Editor</div>

<!-- ================= STATUS BAR ================= -->
<div id="status">
  <div class="t" style="left:17.2px">Page 1 of 3</div>
  <div class="t" style="left:76.6px;letter-spacing:.12px">1164 words</div>
  <svg style="left:135px;top:2.5px" width="13" height="11" viewBox="0 0 13 11"><path d="M.9 1.300h2.600q1.200 0 1.200 1v6.400q0-.8-1.200-.8H.9zM4.700 2.300q0-1 1.200-1h2.200v3M4.700 8.700q0-.8 1.200-.8h1.500M4.700 8.700v1.500" fill="none" stroke="#666" stroke-width=".85"/><path d="M7.700 5.800l1.500 1.600 2.600-3.300" fill="none" stroke="#666" stroke-width=".9"/></svg>
  <div class="t" style="left:163.300px;letter-spacing:.17px">English (United States)</div>
  <svg style="left:267.500px;top:2px" width="14" height="13" viewBox="0 0 14 13"><path d="M5.800 1.500a4.500 4.500 0 1 0 1.300 8.600" fill="none" stroke="#666" stroke-width=".9" stroke-dasharray="2.300 1.300"/><path d="M6 3.500v3.200l1.500.8" fill="none" stroke="#666" stroke-width=".85"/><path d="M9.700 1.700v2.600M8.400 3h2.600" stroke="#666" stroke-width=".85"/><path d="M7.600 9.300l1.600 1.700 2.700-3" fill="none" stroke="#666" stroke-width=".95"/></svg>
  <div class="t" style="left:282.800px;letter-spacing:.22px">Accessibility: Good to go</div>
  <!-- focus -->
  <svg style="left:724px;top:3px" width="13" height="10" viewBox="0 0 13 10"><rect x="1.400" y="1.300" width="10.200" height="7.300" rx=".8" fill="none" stroke="#666" stroke-width="1"/><path d="M3.300 4V3.200h1M8.700 3.200h1V4M3.300 5.900v.8h1M8.700 6.700h1v-.8" fill="none" stroke="#666" stroke-width=".8"/></svg>
  <div class="t" style="left:741px">Focus</div>
  <!-- print layout (selected) -->
  <div class="abs" style="left:772.200px;top:.5px;width:26.300px;height:15.500px;background:#b4b4b4"></div>
  <svg style="left:779px;top:2.500px" width="13" height="11" viewBox="0 0 13 11"><rect x="1.300" y=".9" width="10.300" height="9" rx="1" fill="#cfcfcf" stroke="#dcdcdc" stroke-width=".9"/><path d="M1.700 3.900h9.500M1.700 6.900h9.500" stroke="#e4e4e4" stroke-width=".8"/></svg>
  <!-- web layout -->
  <svg style="left:804px;top:2.500px" width="14" height="12" viewBox="0 0 14 12"><path d="M1.500 1.200h7.700v3.300M1.500 1.200v7.700h4" fill="none" stroke="#777" stroke-width="1"/><path d="M2.900 3h5M2.900 4.600h5M2.900 6.200h3" stroke="#999" stroke-width=".7"/><circle cx="9.600" cy="8" r="3" fill="#666"/><path d="M7.300 7.400q1.300.8 2-.4.600-1 1.900-.9M8.600 10.600q.3-1.500 1.600-1.300 1.500.2 2-.9" fill="none" stroke="#ddd" stroke-width=".6"/></svg>
  <!-- outline -->
  <svg style="left:830px;top:3px" width="13" height="10" viewBox="0 0 13 10"><path d="M1.500 1.300h1.200M4.200 1.300h7.300M3.500 4h1.200M6.200 4h5.300M3.500 6.500h1.200M6.200 6.500h5.300M1.500 9h1.200M4.200 9h5.500" stroke="#777" stroke-width=".9"/></svg>
  <!-- draft -->
  <svg style="left:856px;top:3px" width="12" height="10" viewBox="0 0 12 10"><path d="M.8 1.300h10.200M.8 3.800h10.200M.8 6.300h10.200M.8 8.800h7" stroke="#777" stroke-width=".9"/></svg>
  <!-- zoom -->
  <div class="abs" style="left:880.400px;top:7.500px;width:5.500px;height:1.400px;background:#555"></div>
  <svg style="left:890px;top:5px" width="73" height="7" viewBox="0 0 73 7"><path d="M3.500 3.350H69.600" stroke="#9a9a9a" stroke-width="2.700" stroke-linecap="round"/></svg>
  <div class="abs" style="left:924.300px;top:4px;width:8.400px;height:8.400px;border-radius:4.200px;background:#fff;box-shadow:0 .5px 1.500px rgba(0,0,0,.45)"></div>
  <div class="abs" style="left:967.100px;top:7.500px;width:5.500px;height:1.400px;background:#555"></div>
  <div class="abs" style="left:969.150px;top:5.450px;width:1.400px;height:5.500px;background:#555"></div>
  <div class="t" style="left:985px">130%</div>
</div>

</div>
</body>
</html>
